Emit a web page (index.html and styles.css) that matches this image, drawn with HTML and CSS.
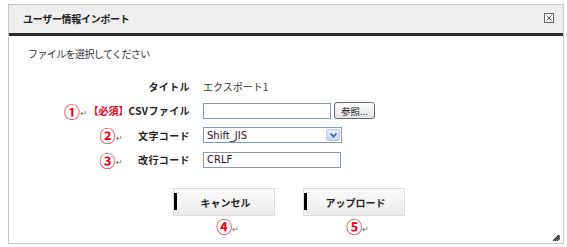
FILE: index.html
```html
<!DOCTYPE html>
<html lang="ja">
	<head>
		<meta charset="UTF-8" />
		<title>ユーザー情報インポート</title>
		<link rel="stylesheet" href="styles.css">
	</head>
	<body>
		<div class="dialog">
			<div class="titlebar">
				<span class="title">ユーザー情報インポート</span>
				<svg class="close" width="10" height="10" viewBox="0 0 10 10">
					<rect x="0.5" y="0.5" width="9" height="9" fill="#fff" stroke="#666" />
					<path d="M2.5 2.5 L7.5 7.5 M7.5 2.5 L2.5 7.5" stroke="#555" stroke-width="1" />
				</svg>
			</div>

			<div class="content">
				<p class="intro">ファイルを選択してください</p>

				<div class="form">
					<div class="label">タイトル</div>
					<div class="value">エクスポート1</div>

					<div class="label"><span class="num">①</span><span class="ret">↵</span><span class="req">【必須】</span>CSVファイル</div>
					<div class="value">
						<span class="input file"></span>
						<span class="browse">参照...</span>
					</div>

					<div class="label"><span class="num">②</span><span class="ret">↵</span><span class="gap"></span>文字コード</div>
					<div class="value">
						<span class="input select">Shift_JIS
							<span class="arrow">
								<svg width="9" height="6" viewBox="0 0 9 6"><path d="M1.5 1.5 L4.5 4.5 L7.5 1.5" fill="none" stroke="#4d6185" stroke-width="1.6" /></svg>
							</span>
						</span>
					</div>

					<div class="label"><span class="num">③</span><span class="ret">↵</span><span class="gap"></span>改行コード</div>
					<div class="value">
						<span class="input text">CRLF</span>
					</div>
				</div>

				<div class="actions">
					<div class="action">
						<div class="btn">キャンセル</div>
						<div class="note"><span class="num">④</span><span class="ret">↵</span></div>
					</div>
					<div class="action">
						<div class="btn">アップロード</div>
						<div class="note"><span class="num">⑤</span><span class="ret">↵</span></div>
					</div>
				</div>
			</div>

			<svg class="grip" width="8" height="7" viewBox="0 0 8 7">
				<path d="M1 7 L7 1 M3 7 L8 2 M5 7 L8 4" stroke="#333" stroke-width="1.2" />
			</svg>
		</div>
	</body>
</html>
```

FILE: styles.css
```css
:root {
	--border: #c8c8c8;
	--title-bg: #eeeeee;
	--red: #e60012;
	--field: #7f9db9;
	--text: #222;
}

* {
	box-sizing: border-box;
}

body {
	margin: 0;
	background: #fff;
	font-family: 'Noto Sans CJK JP', 'DejaVu Sans', sans-serif;
	font-size: 10px;
	color: var(--text);
}

.dialog {
	position: relative;
	margin: 4px 0 0 8px;
	width: 556px;
	height: 240px;
	border: 1px solid var(--border);
}

.titlebar {
	display: flex;
	align-items: center;
	justify-content: space-between;
	height: 31px;
	padding: 0 9px 2px 14px;
	background: var(--title-bg);
	border-bottom: 3px solid #2b2b2b;
}

.title {
	font-weight: bold;
	font-size: 10px;
	letter-spacing: -0.3px;
}

.close {
	display: block;
}

.intro {
	margin: 11px 0 0 19px;
	line-height: 14px;
	color: #333;
	letter-spacing: -0.6px;
}

.form {
	display: grid;
	grid-template-columns: 181px 1fr;
	grid-auto-rows: 24.5px;
	column-gap: 13px;
	margin-top: 13px;
	align-items: center;
}

.label {
	display: flex;
	align-items: center;
	justify-content: flex-end;
	font-weight: bold;
	letter-spacing: 0.4px;
}

.value {
	display: flex;
	align-items: center;
	gap: 3px;
	color: #333;
}

.num {
	color: var(--red);
	font-size: 16px;
	font-weight: bold;
	line-height: 16px;
}

.ret {
	color: #666;
	font-size: 8px;
	font-weight: normal;
	margin: 4px 1px 0 0;
}

.req {
	color: var(--red);
	letter-spacing: 0;
}

.gap {
	width: 14px;
}

.input {
	display: flex;
	align-items: center;
	height: 16px;
	border: 1px solid var(--field);
	background: #fff;
	padding: 0 3px;
	font-family: 'DejaVu Sans', sans-serif;
	font-size: 10px;
	color: #331122;
}

.file {
	width: 128px;
}

.select {
	width: 139px;
	justify-content: space-between;
	padding-right: 1px;
}

.arrow {
	display: flex;
	align-items: center;
	justify-content: center;
	width: 14px;
	height: 12px;
	background: linear-gradient(#e6eefc, #c1d3fb);
	border: 1px solid #b9cbf3;
	border-radius: 2px;
}

.text {
	width: 138px;
}

.browse {
	display: flex;
	align-items: center;
	justify-content: center;
	width: 41px;
	height: 17px;
	border: 1px solid #6a6a6a;
	border-radius: 3px;
	background: linear-gradient(#fdfdfd, #e4e4e4);
	font-size: 9.5px;
	color: #111;
}

.actions {
	display: flex;
	justify-content: center;
	gap: 28px;
	margin-top: 16px;
	padding-left: 5px;
}

.action {
	display: flex;
	flex-direction: column;
	align-items: center;
}

.btn {
	position: relative;
	display: flex;
	align-items: center;
	justify-content: center;
	width: 102px;
	height: 28px;
	border: 1px solid #dcdcdc;
	background: linear-gradient(#fbfbfb, #ebebeb);
	font-weight: bold;
	padding-left: 4px;
}

.btn::before {
	content: '';
	position: absolute;
	left: 0;
	top: 4px;
	width: 3px;
	height: 17px;
	background: #000;
}

.note {
	display: flex;
	align-items: center;
	margin-top: 2px;
	padding-left: 9px;
}

.grip {
	position: absolute;
	right: 3px;
	bottom: 2px;
}
```
